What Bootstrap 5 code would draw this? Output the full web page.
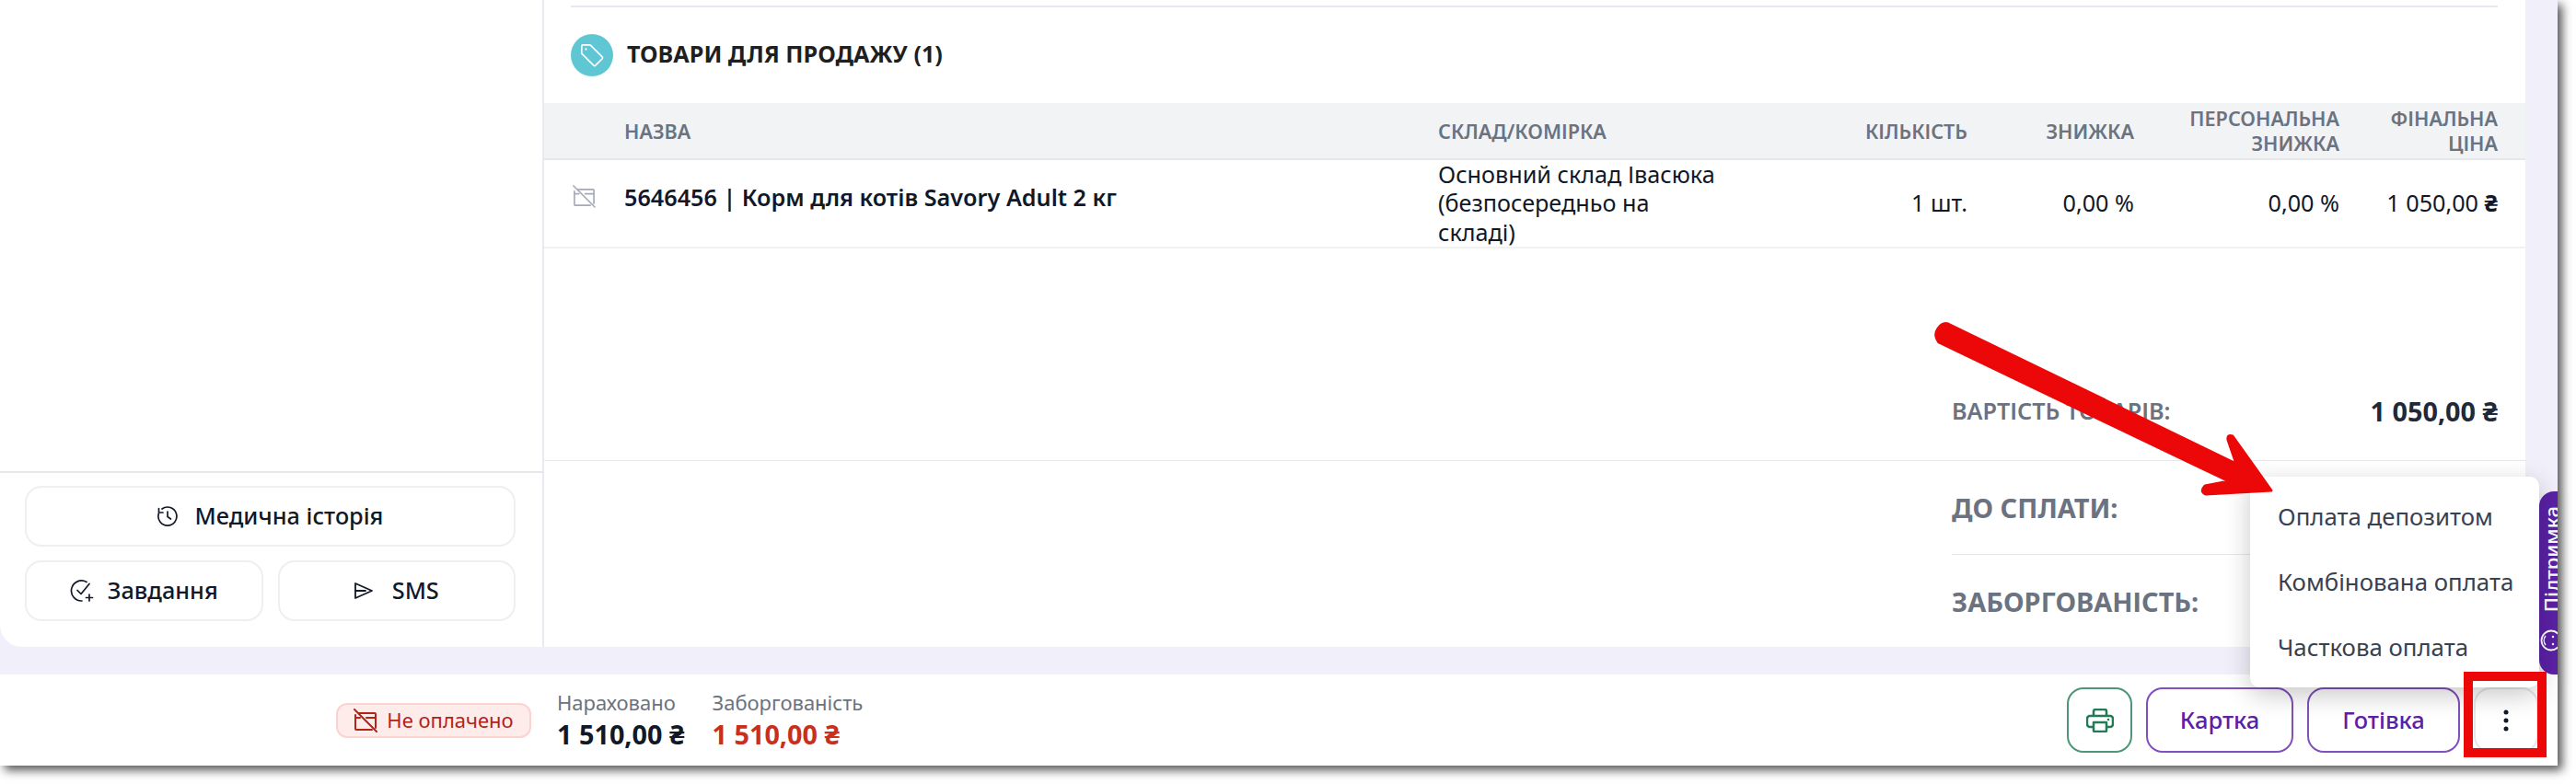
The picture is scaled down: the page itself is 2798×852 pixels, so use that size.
<!DOCTYPE html>
<html lang="uk">
<head>
  <meta charset="UTF-8" />
  <title>Продаж</title>
  <link href="https://cdn.jsdelivr.net/npm/bootstrap@5.3.0/dist/css/bootstrap.min.css" rel="stylesheet">
  <style>
    html, body { height: 852px; }
    body { background: #fff; font-family: "Noto Sans", sans-serif; color: #111827; overflow: hidden; }
    .frame { width: 2778px; height: 832px; background: #f1f0fa; box-shadow: 5px 5px 10px #555; position: relative; }
    .work { height: 703px; }
    .side { width: 591px; border-right: 2px solid #e9eaf0; border-bottom-left-radius: 24px; padding-top: 512px; }
    .side-btns { border-top: 2px solid #e5e7eb; padding: 14px 29px 0 27px; gap: 15px; }
    .side-btn { height: 66px; font-size: 25.3px; font-weight: 500; border: 2px solid #eeeff2; border-radius: 18px; color: #111827; background: #fff; }
    .btn-half { width: 50%; }
    .gap-18 { gap: 19px; }
    .gap-21 { gap: 21px; }
    .gap-15 { gap: 15px; }
    .content { width: 2152px; }
    .top-line { height: 2px; background: #e6e7ef; margin: 6px 30px 0 29px; }
    .title-row { height: 104px; padding-left: 29px; }
    .tag-circle { width: 46px; height: 46px; border-radius: 50%; background: #5fc7d3; }
    .title-text { font-size: 25.2px; font-weight: 700; color: #1f1f1f; margin: 0 0 2px 15px; }
    .goods { table-layout: fixed; width: 100%; margin: 0; }
    .goods th { background: #f2f3f5; color: #6b7280; font-size: 21.6px; font-weight: 600; line-height: 27px; height: 61px; padding: 0 30px 0 0; vertical-align: middle; border-bottom: 2px solid #e5e7eb; }
    .goods td { height: 94px; font-size: 25.2px; line-height: 31.3px; padding: 0 30px 0 0; vertical-align: middle; color: #111827; border-bottom: 2px solid #f0f1f3; }
    .goods .name-cell { font-weight: 600; padding-bottom: 12px; }
    .goods .icon-cell { padding: 0 0 14px 31px; }
    .sum-goods { height: 230px; padding: 124px 30px 0 1529px; font-size: 25.2px; font-weight: 600; color: #6b7280; }
    .sum-goods b { font-size: 28.8px; font-weight: 700; color: #1f2937; }
    .sum-pay { border-top: 1px solid #e5e7eb; padding: 0 30px 0 1529px; }
    .pay-row { height: 101px; font-size: 29px; font-weight: 700; color: #6b7280; }
    .pay-row + .pay-row { border-top: 1px solid #e5e7eb; height: 102px; }
    .foot { height: 99px; margin-top: 30px; background: #fff; padding: 0 21px 0 365px; }
    .state { height: 38px; width: 212px; background: #fdecea; border: 2px solid #fcd3ce; border-radius: 12px; color: #b42318; font-size: 22px; gap: 10px; }
    .money-one { margin-left: 28px; }
    .money-two { margin-left: 30px; }
    .money-lbl { font-size: 22px; color: #6b7280; line-height: 30px; }
    .money-val { font-size: 28.8px; font-weight: 700; line-height: 40px; color: #111827; }
    .money-val.red { color: #c9301c; }
    .act { height: 71px; font-size: 25.5px; font-weight: 500; border-radius: 18px; background: #fff; --bs-btn-padding-x: 0; }
    .act-print { width: 71px; border: 2px solid #4f9578; }
    .act-pay { border: 2px solid #8250bd; color: #5b21a6; }
    .act-card { width: 160px; }
    .act-cash { width: 166px; }
    .act-more { width: 70px; border: 2px solid #e5e7eb; }
    .pay-menu { position: absolute; left: 2444px; top: 518px; width: 314px; height: 229px; border: 0; border-radius: 10px; padding: 8px 0; box-shadow: 0 8px 28px rgba(0,0,0,.22); z-index: 3; }
    .pay-menu .dropdown-item { height: 71px; padding: 0 0 0 30px; font-size: 25.8px; color: #374151; display: flex; align-items: center; }
    .help-tab { position: absolute; left: 2758px; top: 534px; width: 20px; height: 199px; background: #5b21a6; border-radius: 16px 0 0 16px; color: #fff; font-size: 22px; font-weight: 500; overflow: hidden; z-index: 2; }
    .help-tab span { position: absolute; left: 0; bottom: 68px; writing-mode: vertical-rl; transform: rotate(180deg); white-space: nowrap; line-height: 26px; }
    .help-tab svg { position: absolute; left: 0; bottom: 24px; }
    .red-box { position: absolute; left: 2676px; top: 730px; width: 90px; height: 93px; border: 10px solid #ec0808; z-index: 4; }
    .red-arrow { position: absolute; left: 0; top: 0; z-index: 5; pointer-events: none; }
  </style>
</head>
<body>
  <div class="frame d-flex flex-column">
    <!-- main area -->
    <div class="work d-flex">
      <aside class="side bg-white">
        <div class="side-btns d-flex flex-column">
          <button class="side-btn btn d-flex align-items-center justify-content-center gap-18 w-100">
            <svg width="22" height="22" viewBox="0 0 22 22" fill="none" stroke="#111827" stroke-width="1.7" stroke-linecap="round" stroke-linejoin="round"><path d="M5 3a10 10 0 1 1-3.600 5"/><path d="M1.500 2.500v4.500h4.500"/><path d="M11 6v5.500l3.500 2.500"/></svg>
            Медична історія
          </button>
          <div class="d-flex gap-3">
            <button class="side-btn btn btn-half d-flex align-items-center justify-content-center gap-15">
              <svg width="26" height="26" viewBox="0 0 26 26" fill="none" stroke="#111827" stroke-width="1.7" stroke-linecap="round" stroke-linejoin="round"><path d="M18 3.500A11 11 0 1 0 13 24"/><path d="M8 12.500l4 4 9-11"/><path d="M21 17v7M17.500 20.500h7"/></svg>
              Завдання
            </button>
            <button class="side-btn btn btn-half d-flex align-items-center justify-content-center gap-21">
              <svg width="20" height="20" viewBox="0 0 20 20" fill="none" stroke="#111827" stroke-width="1.800" stroke-linejoin="round"><path d="M1 2l18 8-18 8z"/><path d="M1 10h11" stroke-linecap="round"/></svg>
              SMS
            </button>
          </div>
        </div>
      </aside>

      <main class="content bg-white">
        <div class="top-line"></div>
        <div class="title-row d-flex align-items-center">
          <span class="tag-circle d-flex align-items-center justify-content-center">
            <svg width="28" height="28" viewBox="0 0 30 30" fill="none" stroke="#fff" stroke-width="1.800" stroke-linejoin="round"><path d="M3 4.500a1.500 1.500 0 0 1 1.500-1.500h8.500l14 14a1.500 1.500 0 0 1 0 2l-8 8a1.500 1.500 0 0 1-2 0l-14-14z"/><circle cx="8" cy="8" r="1.200" fill="#fff" stroke="none"/></svg>
          </span>
          <span class="title-text">ТОВАРИ ДЛЯ ПРОДАЖУ (1)</span>
        </div>

        <table class="goods table">
          <colgroup>
            <col style="width:87px"><col style="width:884px"><col style="width:340px"><col style="width:265px"><col style="width:181px"><col style="width:223px"><col style="width:172px">
          </colgroup>
          <thead>
            <tr>
              <th></th>
              <th>НАЗВА</th>
              <th>СКЛАД/КОМІРКА</th>
              <th class="text-end">КІЛЬКІСТЬ</th>
              <th class="text-end">ЗНИЖКА</th>
              <th class="text-end">ПЕРСОНАЛЬНА ЗНИЖКА</th>
              <th class="text-end">ФІНАЛЬНА ЦІНА</th>
            </tr>
          </thead>
          <tbody>
            <tr>
              <td class="icon-cell">
                <svg class="d-block" width="25" height="25" viewBox="0 0 26 26" fill="none" stroke="#a5a9b8" stroke-width="1.700" stroke-linecap="round"><path d="M6 5h17a1 1 0 0 1 1 1v15M20 23H3a1 1 0 0 1-1-1V7"/><path d="M2 10h5M14 10h10"/><path d="M1 1l24 24"/></svg>
              </td>
              <td class="name-cell">5646456 | Корм для котів Savory Adult 2 кг</td>
              <td>Основний склад Івасюка (безпосередньо на складі)</td>
              <td class="text-end">1 шт.</td>
              <td class="text-end">0,00 %</td>
              <td class="text-end">0,00 %</td>
              <td class="text-end">1 050,00 <span class="fw-bold">₴</span></td>
            </tr>
          </tbody>
        </table>

        <div class="sum-goods d-flex justify-content-between align-items-center">
          <span>ВАРТІСТЬ ТОВАРІВ:</span>
          <b>1 050,00 ₴</b>
        </div>
        <div class="sum-pay">
          <div class="pay-row d-flex align-items-center">ДО СПЛАТИ:</div>
          <div class="pay-row d-flex align-items-center">ЗАБОРГОВАНІСТЬ:</div>
        </div>
      </main>
    </div>

    <!-- bottom bar -->
    <footer class="foot d-flex align-items-center">
      <div class="state d-flex align-items-center justify-content-center">
        <svg width="26" height="26" viewBox="0 0 26 26" fill="none" stroke="#b42318" stroke-width="2" stroke-linecap="round"><path d="M6 5h17a1 1 0 0 1 1 1v15M20 23H3a1 1 0 0 1-1-1V7"/><path d="M2 10h5M14 10h10"/><path d="M1 1l24 24"/></svg>
        Не оплачено
      </div>
      <div class="money-one">
        <div class="money-lbl">Нараховано</div>
        <div class="money-val">1 510,00 ₴</div>
      </div>
      <div class="money-two">
        <div class="money-lbl">Заборгованість</div>
        <div class="money-val red">1 510,00 ₴</div>
      </div>
      <div class="ms-auto d-flex gap-15 align-items-center">
        <button class="act act-print btn d-flex align-items-center justify-content-center">
          <svg width="30" height="26" viewBox="0 0 30 26" fill="none" stroke="#227a56" stroke-width="2.500" stroke-linejoin="round"><path d="M8 8V3a2 2 0 0 1 2-2h10a2 2 0 0 1 2 2v5"/><path d="M8 20H4a3 3 0 0 1-3-3v-6a3 3 0 0 1 3-3h22a3 3 0 0 1 3 3v6a3 3 0 0 1-3 3h-4"/><path d="M8 15h14v9a1 1 0 0 1-1 1H9a1 1 0 0 1-1-1z"/><circle cx="24" cy="12" r="1.300" fill="#227a56" stroke="none"/></svg>
        </button>
        <button class="act act-pay act-card btn">Картка</button>
        <button class="act act-pay act-cash btn">Готівка</button>
        <button class="act act-more btn d-flex align-items-center justify-content-center">
          <svg width="6" height="28" viewBox="0 0 6 28" fill="#111827"><circle cx="3" cy="5" r="2.500"/><circle cx="3" cy="14" r="2.500"/><circle cx="3" cy="23" r="2.500"/></svg>
        </button>
      </div>
    </footer>

    <!-- overlays -->
    <div class="help-tab">
      <span>Підтримка</span>
      <svg width="20" height="26" viewBox="0 0 20 26" fill="none" stroke="#fff" stroke-width="1.800"><circle cx="13" cy="13" r="10.500"/><path d="M7 8a8 8 0 0 0 0 10" stroke-width="1.500"/><circle cx="15" cy="9" r="1.200" fill="#fff" stroke="none"/><circle cx="15" cy="17" r="1.200" fill="#fff" stroke="none"/></svg>
    </div>
    <ul class="dropdown-menu show pay-menu">
      <li><a class="dropdown-item" href="#">Оплата депозитом</a></li>
      <li><a class="dropdown-item" href="#">Комбінована оплата</a></li>
      <li><a class="dropdown-item" href="#">Часткова оплата</a></li>
    </ul>
    <div class="red-box"></div>
    <svg class="red-arrow" width="2798" height="852" viewBox="0 0 2798 852">
      <path d="M2116 352 L2429 504 L2420 478 Q2419 472 2425 474 L2467 533 L2396 537 Q2389 534 2395 528 L2421 523 L2106 372 Q2100 364 2105 357 Q2110 350 2116 352 Z" fill="#ec0808" stroke="#ec0808" stroke-width="3" stroke-linejoin="round"/>
    </svg>
  </div>

  <script src="https://cdn.jsdelivr.net/npm/bootstrap@5.3.0/dist/js/bootstrap.bundle.min.js"></script>
</body>
</html>
